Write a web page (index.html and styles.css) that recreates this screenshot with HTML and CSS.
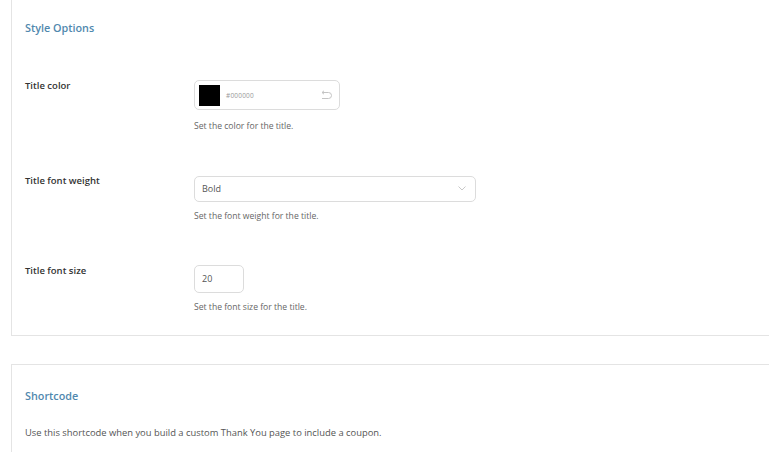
FILE: index.html
```html
<!DOCTYPE html>
<html lang="en">
<head>
    <meta charset="UTF-8">
    <meta name="viewport" content="width=device-width, initial-scale=1.0">
    <title>Style Options</title>
    <link rel="stylesheet" href="styles.css">
</head>
<body>
    <div class="panel panel-first">
        <h2>Style Options</h2>

        <div class="row">
            <label class="row-label">Title color</label>
            <div class="row-field">
                <div class="color-picker">
                    <span class="swatch"></span>
                    <span class="color-value">#000000</span>
                    <svg class="reset" width="12" height="10" viewBox="0 0 12 10">
                        <path d="M2 2.5 H8.5 a3 3 0 0 1 0 6 H2" fill="none" stroke="#c4c4c4" stroke-width="1"/>
                        <path d="M4 0.8 L2 2.5 L4 4.2" fill="none" stroke="#c4c4c4" stroke-width="1"/>
                    </svg>
                </div>
                <p class="desc desc-color">Set the color for the title.</p>
            </div>
        </div>

        <div class="row">
            <label class="row-label" for="weight">Title font weight</label>
            <div class="row-field">
                <div class="select-wrap">
                    <select id="weight">
                        <option>Bold</option>
                        <option>Normal</option>
                    </select>
                    <svg class="chevron" width="8" height="5" viewBox="0 0 8 5">
                        <path d="M0.5 0.5 L4 4 L7.5 0.5" fill="none" stroke="#c8c8c8" stroke-width="1"/>
                    </svg>
                </div>
                <p class="desc">Set the font weight for the title.</p>
            </div>
        </div>

        <div class="row">
            <label class="row-label" for="size">Title font size</label>
            <div class="row-field">
                <input type="text" id="size" class="size-input" value="20">
                <p class="desc">Set the font size for the title.</p>
            </div>
        </div>
    </div>

    <div class="panel panel-second">
        <h2>Shortcode</h2>
        <p class="intro">Use this shortcode when you build a custom Thank You page to include a coupon.</p>
    </div>
</body>
</html>
```

FILE: styles.css
```css
body {
    font-family: "Open Sans", "Noto Sans", Arial, sans-serif;
    background-color: #ffffff;
    margin: 0;
    overflow: hidden;
}
.panel {
    margin-left: 11px;
    margin-right: -20px;
    border: 1px solid #e4e4e4;
    background: #ffffff;
    padding-left: 13px;
}
.panel-first {
    margin-top: -1px;
    padding-top: 20px;
    padding-bottom: 22px;
}
.panel-second {
    margin-top: 28px;
    padding-top: 23px;
    padding-bottom: 20px;
}
h2 {
    margin: 0;
    font-size: 10.8px;
    line-height: 16px;
    font-weight: 600;
    color: #5088ae;
}
.panel-first h2 {
    margin-bottom: 44px;
}
.row {
    display: flex;
    margin-bottom: 43px;
}
.row:last-child {
    margin-bottom: 0;
}
.row-label {
    width: 169px;
    flex-shrink: 0;
    font-size: 9.5px;
    line-height: 12px;
    font-weight: 600;
    color: #333;
}
.row-field {
    display: flex;
    flex-direction: column;
    align-items: flex-start;
}
.desc {
    margin: 8px 0 0;
    font-size: 8.6px;
    line-height: 12px;
    color: #666;
}
.desc-color {
    margin-top: 10px;
}
.color-picker {
    box-sizing: border-box;
    width: 146px;
    height: 30px;
    border: 1px solid #dcdcdc;
    border-radius: 5px;
    display: flex;
    align-items: center;
    padding: 0 7px 0 4px;
}
.swatch {
    width: 21px;
    height: 21px;
    background: #000;
}
.color-value {
    margin-left: 6px;
    font-size: 6.5px;
    color: #999;
    letter-spacing: 0.2px;
    flex: 1;
}
.reset {
    display: block;
}
.select-wrap {
    position: relative;
}
select {
    box-sizing: border-box;
    width: 282px;
    height: 26px;
    border: 1px solid #dcdcdc;
    border-radius: 5px;
    padding: 0 7px;
    font-family: inherit;
    font-size: 9px;
    color: #555;
    background: #fff;
    appearance: none;
    -webkit-appearance: none;
    outline: none;
}
.chevron {
    position: absolute;
    right: 10px;
    top: 11px;
}
.size-input {
    box-sizing: border-box;
    width: 50px;
    height: 28px;
    border: 1px solid #dcdcdc;
    border-radius: 5px;
    padding: 0 7px;
    font-family: inherit;
    font-size: 9px;
    color: #555;
    outline: none;
}
.intro {
    margin: 22px 0 0;
    font-size: 9.4px;
    line-height: 14px;
    color: #555;
}
```
